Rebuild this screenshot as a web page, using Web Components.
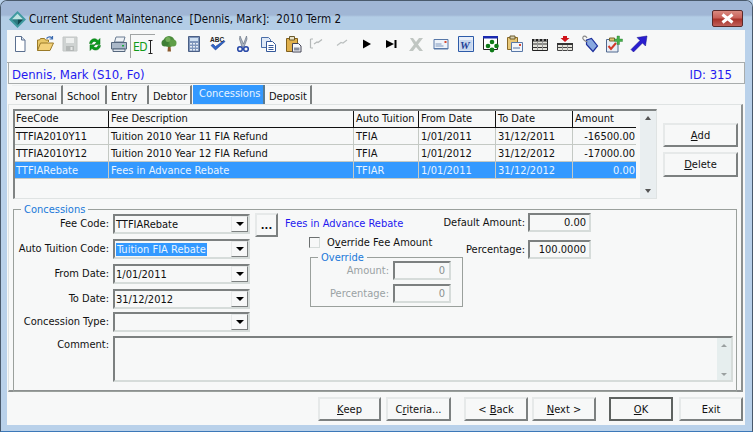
<!DOCTYPE html>
<html>
<head>
<meta charset="utf-8">
<title>Current Student Maintenance</title>
<style>
  html, body { margin: 0; padding: 0; background: #b9d1ea; overflow: hidden; }
  body { font: 11px "DejaVu Sans Condensed", "DejaVu Sans", sans-serif; color: #111; }
</style>
</head>
<body>
<win-frame caption="Current Student Maintenance  [Dennis, Mark]:  2010 Term 2">
  <tool-bar></tool-bar>
  <name-bar name="Dennis, Mark (S10, Fo)" ident="ID: 315"></name-bar>
  <tab-strip active="Concessions" tabs="Personal:51,School:43,Entry:41,Debtor:42,Concessions:72,Deposit:46"></tab-strip>
  <tab-panel>
    <div slot="top" style="display:flex">
      <fee-grid>
        <fee-row><span>TTFIA2010Y11</span><span>Tuition 2010 Year 11 FIA Refund</span><span>TFIA</span><span>1/01/2011</span><span>31/12/2011</span><span class="num">-16500.00</span></fee-row>
        <fee-row><span>TTFIA2010Y12</span><span>Tuition 2010 Year 12 FIA Refund</span><span>TFIA</span><span>1/01/2012</span><span>31/12/2012</span><span class="num">-17000.00</span></fee-row>
        <fee-row selected><span>TTFIARebate</span><span>Fees in Advance Rebate</span><span>TFIAR</span><span>1/01/2011</span><span>31/12/2012</span><span class="num">0.00</span></fee-row>
      </fee-grid>
      <div style="display:flex;flex-direction:column;gap:5px;margin:14px 0 0 6px">
        <ui-button style="width:75px;height:24px"><u>A</u>dd</ui-button>
        <ui-button style="width:75px;height:25px"><u>D</u>elete</ui-button>
      </div>
    </div>
    <group-box slot="bottom" label="Concessions">
      <concession-form></concession-form>
    </group-box>
  </tab-panel>
  <action-bar>
    <ui-button style="width:63px;margin-right:5px"><u>K</u>eep</ui-button>
    <ui-button style="width:65px;margin-right:13px">C<u>r</u>iteria...</ui-button>
    <ui-button style="width:64px;margin-right:4px">&lt; <u>B</u>ack</ui-button>
    <ui-button style="width:64px;margin-right:13px"><u>N</u>ext &gt;</ui-button>
    <ui-button default style="width:64px;margin-right:6px"><u>O</u>K</ui-button>
    <ui-button style="width:64px">Exit</ui-button>
  </action-bar>
</win-frame>

<script>
const FONT = '"DejaVu Sans Condensed", "DejaVu Sans", sans-serif';
const COLS = '94px 245px 65px 77px 77px 65px';

class WinFrame extends HTMLElement {
  connectedCallback() {
    this.attachShadow({ mode: 'open' });
    this.shadowRoot.innerHTML = `
      <style>
        :host { display: flex; flex-direction: column; width: 753px; height: 432px; box-sizing: border-box;
          border: 1px solid #4a5a6c; border-bottom-color: #3c78b8; border-radius: 7px 7px 0 0; background: #b9d1ea; position: relative; overflow: hidden; }
        .title { height: 29px; flex: none; display: flex; align-items: center; padding: 7px 0 0 8px; box-sizing: border-box;
          background: linear-gradient(#a0b6d5 0, #a0b6d5 14px, #b3cde6 16px, #b3cde6 100%); }
        .title span { font: 11.6px ${FONT}; color: #0c0c14; white-space: pre; margin-left: 3px; }
        .close { position: absolute; right: 9px; top: 9px; width: 31px; height: 17px; box-sizing: border-box; border: 1px solid #5a2a2a; border-radius: 2px;
          background: linear-gradient(#d98a80 0, #c9625a 45%, #a8332a 55%, #c0605a 100%); display: flex; align-items: center; justify-content: center; }
        .client { margin: 0 7px 6px 6px; flex: 1; background: #f7f8f8; display: flex; flex-direction: column; min-height: 0; }
      </style>
      <div class="title">
        <svg width="17" height="17" viewBox="0 0 18 18"><path d="M9 0 18 9 9 18 0 9Z" fill="#3f9aa0"/><path d="M9 3 15 9H3Z" fill="#bfe3e2"/><path d="M9 15 15 9H9Z" fill="#12484e"/><path d="M9 15 3 9H9Z" fill="#2c7a80"/></svg>
        <span>${this.getAttribute('caption')}</span>
      </div>
      <div class="close"><svg width="15" height="11" viewBox="0 0 15 11"><path d="M2.5 1.5 12.5 9.5M12.5 1.5 2.5 9.5" stroke="#fff" stroke-width="3"/></svg></div>
      <div class="client"><slot></slot></div>`;
  }
}

const ICONS = [
  // new
  `<path d="M4.5 1.5h6l3.5 3.5v11.5h-9.5Z" fill="#fff" stroke="#5a6f8f"/><path d="M10.5 1.5v3.5h3.5" fill="#d8e2ee" stroke="#5a6f8f"/>`,
  // open
  `<path d="M1.5 15.5V5h2l1-1.5h4l1 1.5h3v2" fill="#e8c868" stroke="#9a7a28"/><path d="M1.5 15.5 4.5 8h13l-3.5 7.5Z" fill="#f3d27a" stroke="#9a7a28"/><path d="M10.5 3.5c2-2 4-2 5.5-.5M16.5 1v3h-3" fill="none" stroke="#3a6ab0" stroke-width="1.2"/>`,
  // save, disabled
  `<path d="M2 2h14v14H2Z" fill="#cfd3d2" stroke="#c2c6c5"/><path d="M5 3h8v5H5Z" fill="#eef0ef"/><path d="M5 11h8v5H5Z" fill="#b4b8b7"/><path d="M9.5 12h2v3h-2Z" fill="#e6e8e7"/>`,
  // refresh
  `<path d="M3.5 8.5C4 4 9 2 12 5.5L14 3.5V9.5H8.5L10.5 7.5C8.5 5.5 6.5 6.5 6 8.5Z" fill="#0a9a1c" stroke="#067012" stroke-width=".5"/><path d="M14.5 10.5C14 15 9 16.5 6 13.5L4 15.5V9.8H9.5L7.5 11.5C9.5 13.5 11.5 12.5 12 10.5Z" fill="#0a9a1c" stroke="#067012" stroke-width=".5"/>`,
  // print
  `<path d="M6 2h9l-1.5 5H4.5Z" fill="#eef2f6" stroke="#6a7c92"/><path d="M1.5 7.5h15v6.5h-15Z" fill="#aab8c8" stroke="#55677d"/><path d="M3 14h12v2.5H3Z" fill="#dfe5ec" stroke="#55677d"/><path d="M12 10h2v1.5h-2Z" fill="#1aa83a"/>`,
  // ED, pressed: handled below
  ``,
  // tree
  `<path d="M8 11h2.5l.5 5.5H7.5Z" fill="#8a5a2c"/><circle cx="9" cy="6.5" r="5.5" fill="#4c8c3c"/><circle cx="5" cy="8" r="3.5" fill="#3f7f36"/><circle cx="13" cy="8" r="3.5" fill="#5f9e48"/><circle cx="8" cy="4.5" r="2.5" fill="#74ae5a"/>`,
  // calculator
  `<path d="M3.5 1.5h11v15h-11Z" fill="#7f96bc" stroke="#4a5f85"/><path d="M5 3h8v3H5Z" fill="#cfe0f2"/><path d="M5 8h2v1.5H5ZM8 8h2v1.5H8ZM11 8h2v1.5h-2ZM5 11h2v1.5H5ZM8 11h2v1.5H8ZM11 11h2v1.5h-2ZM5 14h2v1.5H5ZM8 14h2v1.5H8ZM11 14h2v1.5h-2Z" fill="#e6ecf5"/>`,
  // spell check
  `<text x="1" y="6.5" font-size="6.5" font-weight="bold" font-family="Liberation Sans" fill="#222">ABC</text><path d="M2 10.5 6.5 15 16 6.5 15 5.5 6.5 11.5 4 9Z" fill="#2f64c8" stroke="#1c3f8c" stroke-width=".6"/>`,
  // cut
  `<path d="M6 1l3.5 8L12.5 1l.5 3-3 8H8L5.5 4Z" fill="#aab4c2" stroke="#5c6878" stroke-width=".6"/><circle cx="6" cy="14" r="2.3" fill="none" stroke="#2a4aa8" stroke-width="1.6"/><circle cx="12" cy="14" r="2.3" fill="none" stroke="#2a4aa8" stroke-width="1.6"/>`,
  // copy
  `<path d="M2.5 2.5h7l2 2v8h-9Z" fill="#dfe9f6" stroke="#4a6ea8"/><path d="M7.5 6.5h6l3 3v7h-9Z" fill="#fff" stroke="#34589a"/><path d="M9.5 10.5h5M9.5 12.5h5M9.5 14.5h5" stroke="#34589a"/>`,
  // paste
  `<path d="M2.5 3.5h11v13h-11Z" fill="#e0b04c" stroke="#80601e"/><path d="M5.5 1.5h5v3.5h-5Z" fill="#e9e2c8" stroke="#6a5a2c"/><path d="M8.5 8.5h6l2.5 2.5v6h-8.5Z" fill="#f4f6fa" stroke="#445"/><path d="M10 12.5h5.5v3H10Z" fill="#8a90a0"/>`,
  // first, disabled
  `<path d="M2.5 4v9M2.5 4H5M2.5 13H5M6 9l3-2 1 .5 4-3" fill="none" stroke="#b4b8b8" stroke-width="1.2"/>`,
  // prev, disabled
  `<path d="M4 10.5l4-3 2 .5 4-3" fill="none" stroke="#bcc0c0" stroke-width="1.2"/>`,
  // play
  `<path d="M5 4.5 13 9 5 13.5Z" fill="#000"/>`,
  // end
  `<path d="M3 5 11 9 3 13Z" fill="#000"/><path d="M11.5 5h2v8h-2Z" fill="#000"/>`,
  // delete, disabled
  `<path d="M3 3h3l3 4 3-4h4l-5 6.5 5 6.5h-3.5L9 12 6 16H2l5-6.5Z" fill="#c0c6c2"/>`,
  // mail
  `<path d="M2 4.5h14v9.5H2Z" fill="#eef3fa" stroke="#5878a8"/><path d="M12.5 6h2v2h-2Z" fill="#d84a30"/><path d="M3.5 11h8M3.5 9h6" stroke="#7d96bc"/><path d="M2 13h14v1H2Z" fill="#5878a8"/>`,
  // word
  `<path d="M1.5 1.5h15v15h-15Z" fill="#e8eef8" stroke="#2c5aa8"/><path d="M2.5 5h13v10.5h-13Z" fill="#c7d7ee"/><text x="3" y="14" font-size="11" font-weight="bold" font-style="italic" font-family="Liberation Serif" fill="#1d3f96">W</text>`,
  // grid / clover
  `<path d="M1.5 1.5h14v13h-14Z" fill="#fff" stroke="#222"/><path d="M1 1h15v2.5H1Z" fill="#1a2ab0"/><g fill="#0e7a18"><circle cx="10" cy="7" r="2.3"/><circle cx="14.5" cy="11" r="2.3"/><circle cx="6" cy="11" r="2.3"/><circle cx="10" cy="15" r="2.4"/></g>`,
  // clipboard mail
  `<path d="M1.5 2.5h10v12h-10Z" fill="#e8c878" stroke="#8a6a28"/><path d="M4 1h5v3H4Z" fill="#d8d0b0" stroke="#6a5a2c"/><path d="M5.5 7.5h11v9h-11Z" fill="#f2f6fb" stroke="#5878a8"/><path d="M13 9h2v2h-2Z" fill="#d84a30"/><path d="M7 13h7" stroke="#5878a8"/>`,
  // film
  `<path d="M1.5 4.5h15v11h-15Z" fill="#e4e4dc" stroke="#222"/><path d="M1 4h16v2.5H1Z" fill="#222"/><path d="M3 4.5h2v1H3ZM7 4.5h2v1H7ZM11 4.5h2v1h-2ZM15 4.5h1v1h-1Z" fill="#eee"/><path d="M1 9h16M1 12.5h16" stroke="#333"/><path d="M6.5 7v8M11.5 7v8" stroke="#999"/>`,
  // film + red
  `<path d="M7 1h4v2h2.5L9 7 4.5 3H7Z" fill="#d0121a"/><path d="M1.5 8.5h15v7h-15Z" fill="#e4e4dc" stroke="#444"/><path d="M1 8h16v2H1Z" fill="#333"/><path d="M1 12.5h16" stroke="#444"/><path d="M6.5 10v6M11.5 10v6" stroke="#999"/>`,
  // tag
  `<path d="M6 5l5-1.5 6 7.500-4.500 5.500-6.500-7Z" transform="translate(-.5 0)" fill="#88a8e0" stroke="#1c2f9c" stroke-width="1.2"/><path d="M6.5 7C3 6 1 3.5 2 2S5 1 6 3" fill="none" stroke="#8a8a8a" stroke-width="1.2"/>`,
  // task add
  `<path d="M1.5 4.5h11.5v12.500H1.5Z" fill="#e8eef6" stroke="#50698f"/><path d="M4.5 3h5v3h-5Z" fill="#d8c070" stroke="#7a6a2c"/><path d="M3.5 11l2.5 3L11 8" fill="none" stroke="#d23a2a" stroke-width="2"/><path d="M12 1h2.5v3H17.5v2.5h-3V9.5H12V6.5H9.5V4H12Z" fill="#44b04a" stroke="#2a7a30" stroke-width=".4"/>`,
  // arrow
  `<path d="M17 1 15.5 11 12.5 8 3.5 17 1 14.5 10 5.5 7 2.5Z" fill="#2a1ed0" stroke="#14108a" stroke-width=".5"/>`
];

class ToolBar extends HTMLElement {
  connectedCallback() {
    this.attachShadow({ mode: 'open' });
    const cells = ICONS.map((p, i) => {
      if (i === 5) {
        return `<span class="cell ed"><span class="edt">ED</span><svg width="5" height="14" viewBox="0 0 5 14"><path d="M.5.5h4M.5 13.5h4M2.5.5v13" stroke="#222" fill="none"/></svg></span>`;
      }
      return `<span class="cell"><svg width="18" height="18" viewBox="0 0 18 18">${p}</svg></span>`;
    }).join('');
    this.shadowRoot.innerHTML = `
      <style>
        :host { display: flex; flex: none; height: 33px; box-sizing: border-box; padding: 2px 0 0 1px; border-bottom: 1px solid #a8acac; }
        .cell { width: 24.76px; height: 26px; flex: none; display: flex; align-items: center; justify-content: center; box-sizing: border-box; padding-bottom: 3px; }
        .ed { border: 1px solid #a0a4a4; border-width: 1px 0 0 1px; gap: 1px; height: 24px; padding: 1px 0 0 1px; margin: 2px 2px 0 -2px; }
        .edt { font: 12px ${FONT}; color: #109a18; letter-spacing: -.5px; }
      </style>${cells}`;
  }
}

class NameBar extends HTMLElement {
  connectedCallback() {
    this.attachShadow({ mode: 'open' });
    this.shadowRoot.innerHTML = `
      <style>
        :host { display: flex; flex: none; justify-content: space-between; align-items: center; height: 21px; box-sizing: border-box;
          margin-left: 1px; padding: 2px 12px 0 3px; border: 1px solid #a8acac; border-width: 0 1px 1px 1px; color: #2418f0; font: 13px ${FONT}; }
      </style>
      <span>${this.getAttribute('name')}</span><span>${this.getAttribute('ident')}</span>`;
  }
}

class TabStrip extends HTMLElement {
  connectedCallback() {
    this.attachShadow({ mode: 'open' });
    const active = this.getAttribute('active');
    const tabs = this.getAttribute('tabs').split(',').map(t => {
      const [name, w] = t.split(':');
      return `<span class="tab${name === active ? ' on' : ''}" style="width:${w}px">${name}</span>`;
    }).join('');
    this.shadowRoot.innerHTML = `
      <style>
        :host { display: flex; flex: none; height: 20px; box-sizing: border-box; padding: 1px 0 0 5px; gap: 1px; }
        .tab { height: 19px; box-sizing: border-box; display: flex; align-items: center; padding: 2px 0 0 3px; border-right: 2px solid #7c8080; border-top: 1px solid #eef0f0; color: #111; }
        .on { background: #3399ff; color: #e8f4ff; height: 20px; padding: 0 0 4px 6px; border-top: 0; border-right-color: #5a7a90; }
      </style>${tabs}`;
  }
}

class TabPanel extends HTMLElement {
  connectedCallback() {
    this.attachShadow({ mode: 'open' });
    this.shadowRoot.innerHTML = `
      <style>
        :host { display: flex; flex-direction: column; flex: none; height: 288px; box-sizing: border-box; margin: 0 2px 0 1px;
          padding: 4px 4px 3px 4px; border: 1px solid #dfe3e3; border-right: 2px solid #8c9090; border-bottom: 2px solid #8c9090; }
        .top { height: 100px; flex: none; }
      </style>
      <div class="top"><slot name="top"></slot></div>
      <slot name="bottom"></slot>`;
  }
}

class FeeGrid extends HTMLElement {
  connectedCallback() {
    this.attachShadow({ mode: 'open' });
    this.shadowRoot.innerHTML = `
      <style>
        :host { display: flex; width: 644px; height: 90px; flex: none; box-sizing: border-box; border: 1px solid #dfe3e3; border-top: 2px solid #808484; border-left: 2px solid #808484; position: relative; }
        .body { flex: 1; min-width: 0; }
        .head { display: grid; grid-template-columns: ${COLS}; height: 17px; box-sizing: border-box; border-bottom: 1px solid #111; }
        .head span { border-right: 1px solid #111; padding: 1px 0 0 2px; box-sizing: border-box; white-space: nowrap; overflow: hidden; }
        .head span:first-child { padding-left: 1px; }
        .head span:last-child { border-right: 0; }
        .bar { width: 16px; flex: none; background: #e9eef0; display: flex; flex-direction: column; justify-content: space-between; align-items: center; padding: 5px 0; box-sizing: border-box; margin-left: 4px; }
        .a { width: 0; height: 0; border: 3.5px solid transparent; }
        .up { border-bottom: 4px solid #555; border-top: 0; }
        .dn { border-top: 4px solid #555; border-bottom: 0; }
      </style>
      <div class="body">
        <div class="head"><span>FeeCode</span><span>Fee Description</span><span>Auto Tuition</span><span>From Date</span><span>To Date</span><span>Amount</span></div>
        <slot></slot>
      </div>
      <div class="bar"><i class="a up"></i><i class="a dn"></i></div>`;
  }
}

class FeeRow extends HTMLElement {
  connectedCallback() {
    this.attachShadow({ mode: 'open' });
    this.shadowRoot.innerHTML = `
      <style>
        :host { display: grid; grid-template-columns: ${COLS}; height: 17px; box-sizing: border-box; border-bottom: 1px solid #c4c9c4; }
        :host([selected]) { background: #3399ff; color: #e8f4ff; }
        ::slotted(span) { border-right: 1px solid #c4c9c4; padding: 2px 2px 0 2px; box-sizing: border-box; white-space: nowrap; overflow: hidden; }
        ::slotted(span:first-child) { padding-left: 1px; }
        ::slotted(.num) { text-align: right; border-right: 0; padding-right: 3px; }
      </style><slot></slot>`;
  }
}

class UiButton extends HTMLElement {
  connectedCallback() {
    this.attachShadow({ mode: 'open' });
    this.shadowRoot.innerHTML = `
      <style>
        :host { display: flex; align-items: center; justify-content: center; box-sizing: border-box; flex: none; height: 24px; background: #f7f8f8; color: #111;
          border: 2px solid; border-color: #e6e9e9 #7c8080 #7c8080 #e6e9e9; white-space: pre; }
        :host([default]) { border-color: #5e6260; }
      </style><slot></slot>`;
  }
}

class ActionBar extends HTMLElement {
  connectedCallback() {
    this.attachShadow({ mode: 'open' });
    this.shadowRoot.innerHTML = `
      <style>
        :host { display: flex; flex: none; justify-content: flex-end; padding: 5px 2px 0 0; height: 29px; box-sizing: border-box; }
      </style><slot></slot>`;
  }
}

class GroupBox extends HTMLElement {
  connectedCallback() {
    this.attachShadow({ mode: 'open' });
    this.shadowRoot.innerHTML = `
      <style>
        :host { display: block; flex: none; box-sizing: border-box; border: 1px solid #9aa09c; position: relative; }
        .cap { position: absolute; left: 7px; top: -7px; padding: 0 3px; line-height: 13px; background: #f7f8f8; color: #1a78d8; }
      </style>
      <span class="cap">${this.getAttribute('label')}</span><slot></slot>`;
  }
}

class UiCombo extends HTMLElement {
  connectedCallback() {
    this.attachShadow({ mode: 'open' });
    this.shadowRoot.innerHTML = `
      <style>
        :host { display: flex; box-sizing: border-box; width: 137px; height: 20px; border: 2px solid; border-color: #7c8080 #d6dcda #d6dcda #7c8080; flex: none; }
        .txt { flex: 1; display: flex; align-items: center; padding-left: 1px; min-width: 0; }
        .sel { background: #3399ff; color: #e8f4ff; padding: 0 1px; line-height: 13px; }
        .btn { width: 17px; flex: none; box-sizing: border-box; margin: 0; border: 1px solid; border-color: #e6e9e9 #7c8080 #7c8080 #e6e9e9; display: flex; align-items: center; justify-content: center; }
        .btn i { width: 0; height: 0; border: 4px solid transparent; border-top: 4px solid #000; border-bottom: 0; }
      </style>
      <span class="txt"><span class="${this.hasAttribute('selected') ? 'sel' : ''}"><slot></slot></span></span><span class="btn"><i></i></span>`;
  }
}

class UiField extends HTMLElement {
  connectedCallback() {
    this.attachShadow({ mode: 'open' });
    this.shadowRoot.innerHTML = `
      <style>
        :host { display: flex; align-items: center; justify-content: flex-end; box-sizing: border-box; flex: none; height: 20px; padding-right: 3px;
          border: 2px solid; border-color: #7c8080 #d6dcda #d6dcda #7c8080; }
        :host([disabled]) { color: #8a9090; padding-right: 4px; }
      </style><slot></slot>`;
  }
}

class ConcessionForm extends HTMLElement {
  connectedCallback() {
    this.attachShadow({ mode: 'open' });
    this.shadowRoot.innerHTML = `
      <style>
        :host { display: flex; flex-direction: column; height: 181px; box-sizing: border-box; padding-top: 4px; }
        .upper { display: flex; height: 122px; flex: none; }
        .labels { display: grid; grid-template-columns: 95px 137px; grid-template-rows: 25px 25px 25px 23px 20px; column-gap: 4px; align-items: start; }
        .labels label { text-align: right; padding-top: 3px; white-space: nowrap; }
        .mid { width: 212px; margin-left: 5px; flex: none; }
        .ddd { width: 23px; height: 24px; font-weight: bold; margin-top: -1px; }
        .row1 { display: flex; gap: 7px; }
        .blue { color: #2418f0; padding-top: 3px; white-space: nowrap; }
        .chk { display: flex; align-items: center; gap: 7px; margin: -2px 0 0 54px; height: 14px; }
        .chk i { width: 11px; height: 11px; box-sizing: border-box; border: 1px solid; border-color: #6c7070 #d6dcda #d6dcda #6c7070; }
        .over { width: 153px; height: 50px; box-sizing: border-box; border: 1px solid #9aa09c; position: relative; margin: 8px 0 0 55px; padding: 3px 11px 0 0; color: #9aa2a4; }
        .over .cap { position: absolute; left: 7px; top: -7px; padding: 0 3px; line-height: 13px; background: #f7f8f8; color: #1a78d8; }
        .orow { display: flex; justify-content: flex-end; align-items: center; gap: 4px; margin-bottom: 4px; }
        .orow ui-field { width: 58px; height: 19px; }
        .right { display: grid; grid-template-columns: 83px 63px; grid-template-rows: 27px 20px; column-gap: 3px; margin: -1px 0 0 -25px; flex: none; }
        .right label { text-align: right; padding-top: 3px; white-space: nowrap; }
        .right ui-field { height: 19px; }
        .cmt { display: flex; gap: 4px; }
        .cmt label { width: 95px; text-align: right; flex: none; padding-top: 2px; }
        .box { width: 620px; height: 46px; box-sizing: border-box; border: 2px solid; border-color: #7c8080 #d6dcda #d6dcda #7c8080; display: flex; justify-content: flex-end; }
        .sb { width: 14px; background: #e6eeee; display: flex; flex-direction: column; justify-content: space-between; align-items: center; padding: 6px 0 4px; box-sizing: border-box; }
        .a { width: 0; height: 0; border: 3px solid transparent; }
        .up { border-bottom: 3px solid #9aa0a0; border-top: 0; }
        .dn { border-top: 3px solid #9aa0a0; border-bottom: 0; }
      </style>
      <div class="upper">
        <div class="labels">
          <label>Fee Code:</label><ui-combo>TTFIARebate</ui-combo>
          <label>Auto Tuition Code:</label><ui-combo selected>Tuition FIA Rebate</ui-combo>
          <label>From Date:</label><ui-combo>1/01/2011</ui-combo>
          <label>To Date:</label><ui-combo>31/12/2012</ui-combo>
          <label>Concession Type:</label><ui-combo></ui-combo>
        </div>
        <div class="mid">
          <div class="row1"><ui-button class="ddd">...</ui-button><span class="blue">Fees in Advance Rebate</span></div>
          <div class="chk"><i></i><span>O<u>v</u>erride Fee Amount</span></div>
          <div class="over">
            <span class="cap">Override</span>
            <div class="orow"><span>Amount:</span><ui-field disabled>0</ui-field></div>
            <div class="orow"><span>Percentage:</span><ui-field disabled>0</ui-field></div>
          </div>
        </div>
        <div class="right">
          <label>Default Amount:</label><ui-field>0.00</ui-field>
          <label>Percentage:</label><ui-field>100.0000</ui-field>
        </div>
      </div>
      <div class="cmt"><label>Comment:</label><div class="box"><div class="sb"><i class="a up"></i><i class="a dn"></i></div></div></div>`;
  }
}

customElements.define('win-frame', WinFrame);
customElements.define('tool-bar', ToolBar);
customElements.define('name-bar', NameBar);
customElements.define('tab-strip', TabStrip);
customElements.define('tab-panel', TabPanel);
customElements.define('fee-grid', FeeGrid);
customElements.define('fee-row', FeeRow);
customElements.define('ui-button', UiButton);
customElements.define('action-bar', ActionBar);
customElements.define('group-box', GroupBox);
customElements.define('ui-combo', UiCombo);
customElements.define('ui-field', UiField);
customElements.define('concession-form', ConcessionForm);
</script>
</body>
</html>
